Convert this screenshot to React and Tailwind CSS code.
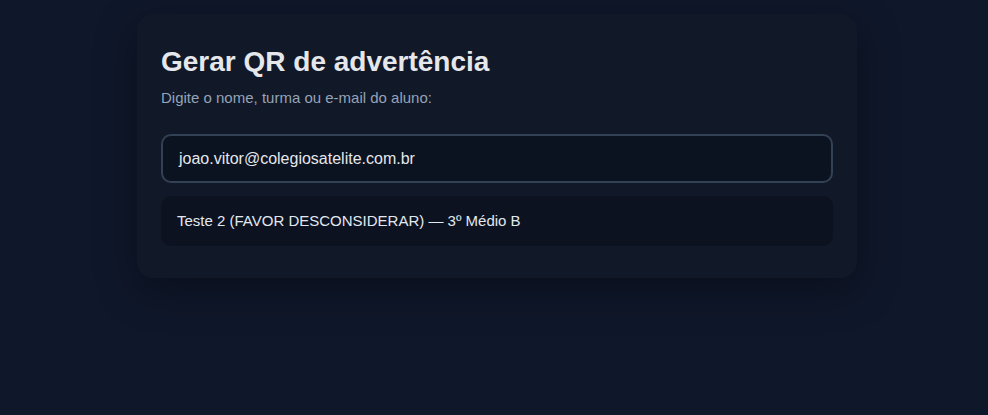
export default function App() {
  return (
    <div
      className="min-h-[415px] w-full bg-[#0f172a] flex justify-center pl-[6px] pt-[14px]"
      style={{ fontFamily: '"Liberation Sans", Arial, sans-serif' }}
    >
      <div className="w-[720px] h-fit rounded-2xl bg-[#111827] px-6 pt-[31px] pb-[32px] shadow-[0_12px_40px_rgba(0,0,0,0.35)]">
        <h2 className="text-[28px] leading-[1.2] font-bold text-[#e5e7eb]">
          Gerar QR de advertência
        </h2>
        <p className="mt-[9px] text-[15px] leading-[1.3] text-[#94a3b8]">
          Digite o nome, turma ou e-mail do aluno:
        </p>
        <div className="mt-[27px] h-[49px] rounded-[10px] border-2 border-[#334155] bg-[#0b1220] px-4 flex items-center text-[16px] text-[#e5e7eb]">
          joao.vitor@colegiosatelite.com.br
        </div>
        <div className="mt-[13px] flex flex-col">
          <div className="h-[50px] rounded-[10px] bg-[#0c1220] px-4 flex items-center text-[15px] text-[#e2e8f0]">
            Teste 2 (FAVOR DESCONSIDERAR) — 3º Médio B
          </div>
        </div>
      </div>
    </div>
  );
}
